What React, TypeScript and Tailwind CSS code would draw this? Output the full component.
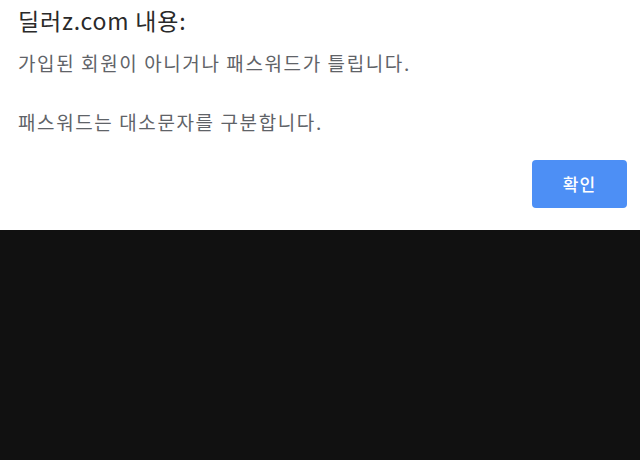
export default function App() {
  return (
    <div className="w-[640px] h-[460px] bg-[#111111] flex flex-col" style={{ fontFamily: '"Noto Sans CJK KR", "Noto Sans", sans-serif' }}>
      <div className="h-[230px] bg-white pl-[18px] pr-[13px] pt-[5px] flex flex-col">
        <h1 className="text-[23px] leading-[30px] tracking-[0.8px] text-[#2a2a2a]">딜러z.com 내용:</h1>
        <p className="mt-[15px] text-[19px] leading-[26px] tracking-[1.6px] text-[#5f6368]">가입된 회원이 아니거나 패스워드가 틀립니다.</p>
        <p className="mt-[33px] text-[19px] leading-[26px] tracking-[1.6px] text-[#5f6368]">패스워드는 대소문자를 구분합니다.</p>
        <div className="mt-auto mb-[22px] flex justify-end">
          <button className="w-[95px] h-[48px] rounded-[4px] bg-[#4d8ff5] text-white text-[17px] font-medium tracking-[1px]">확인</button>
        </div>
      </div>
    </div>
  );
}
